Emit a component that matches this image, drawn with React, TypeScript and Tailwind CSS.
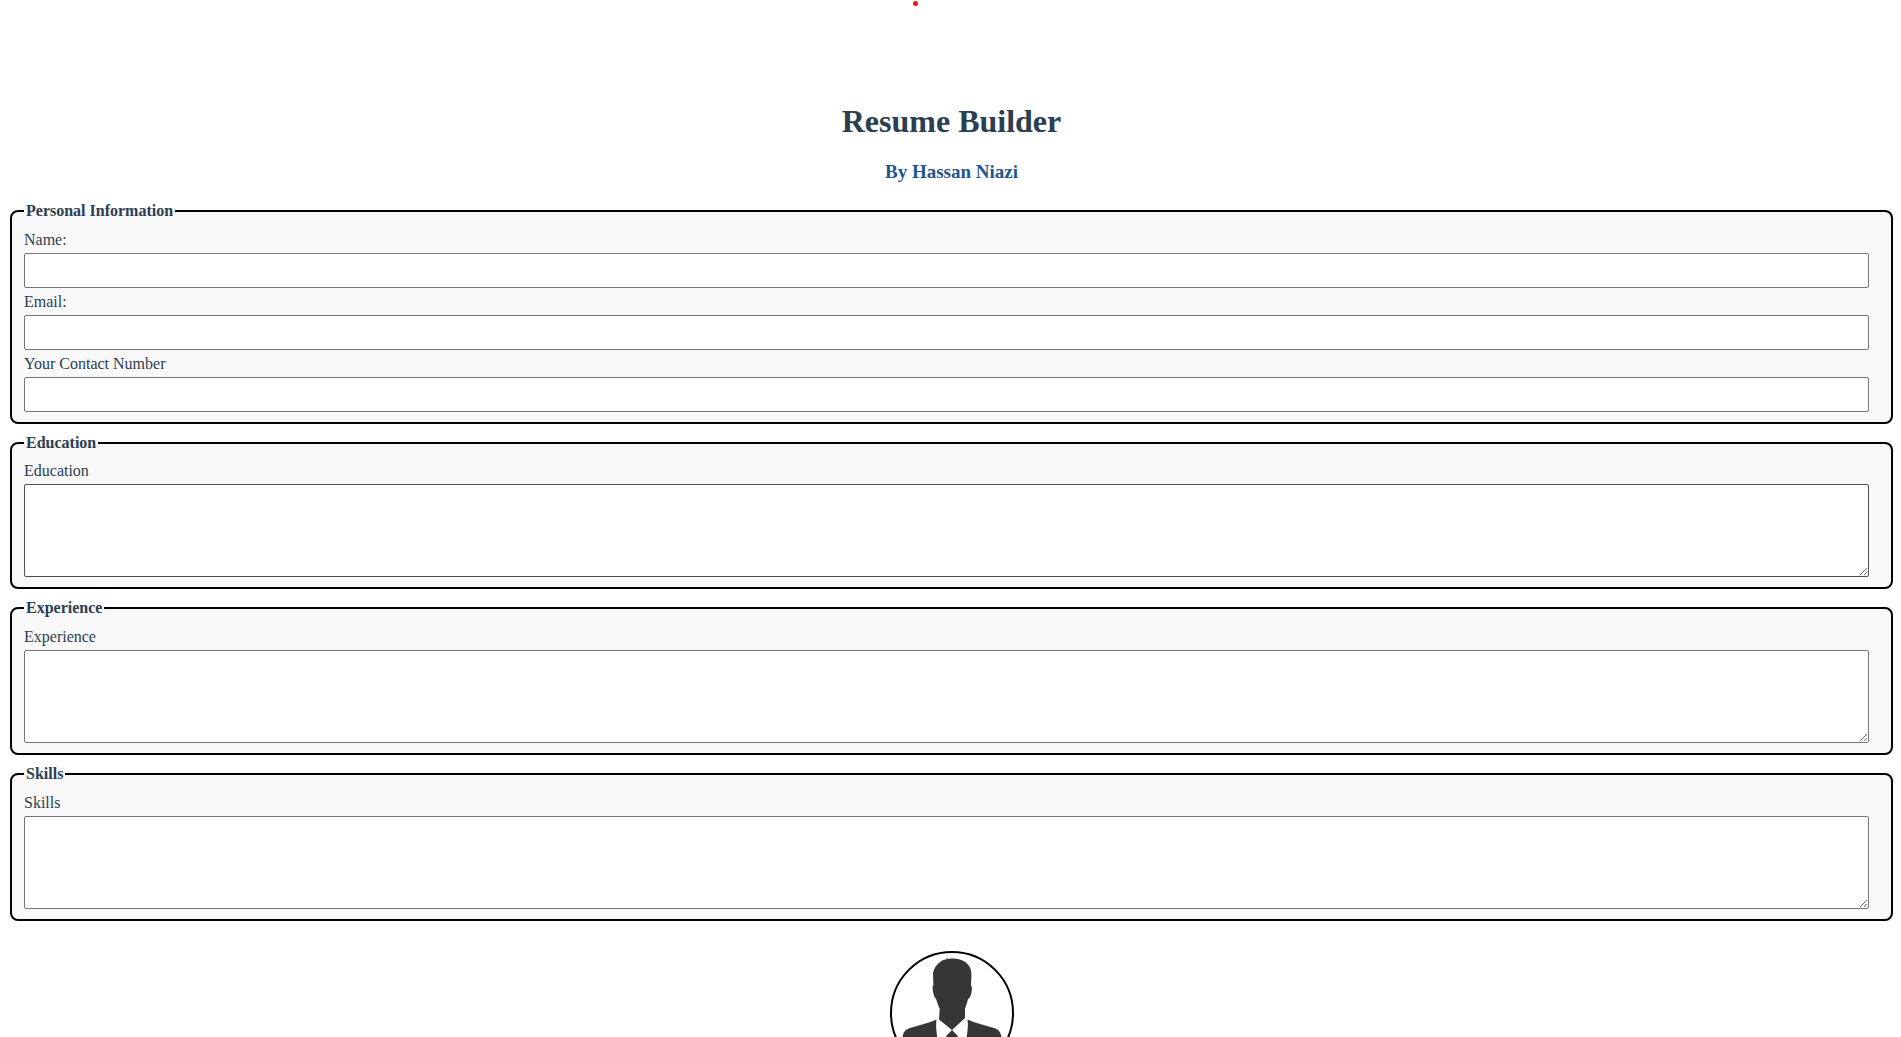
import React from "react";

const labelClass = "block h-[27px] pt-[5px] text-[16px] leading-[18px]";
const controlClass = "block w-full rounded-[2px] border bg-white px-2 text-[16px] text-black";

type SectionProps = { title: string; compact?: boolean; children: React.ReactNode };

function Section({ title, compact = false, children }: SectionProps) {
  return (
    <fieldset className="rounded-[8px] border-2 border-black bg-[#f8f8f8] pr-[22px] pb-[10px] pl-3">
      <legend className="px-[2px] text-[16px] leading-[18px] font-bold">{title}</legend>
      <div className={compact ? "pt-[5px]" : "pt-[6px]"}>{children}</div>
    </fieldset>
  );
}

function TextField({ id, label, type }: { id: string; label: string; type: string }) {
  return (
    <div>
      <label htmlFor={id} className={labelClass}>{label}</label>
      <input id={id} type={type} className={`${controlClass} h-[35px] border-[#767676]`} />
    </div>
  );
}

function TextArea({ id, label, active = false }: { id: string; label: string; active?: boolean }) {
  return (
    <div>
      <label htmlFor={id} className={labelClass}>{label}</label>
      <textarea
        id={id}
        className={`${controlClass} h-[93px] resize-y ${active ? "border-[#4f4f4f]" : "border-[#767676]"}`}
      />
    </div>
  );
}

function Avatar() {
  return (
    <svg viewBox="0 0 120 120" className="size-[120px]" role="img" aria-label="Profile picture">
      <g fill="#363636">
        <path d="M54 4.500L56.500 6C60 5.400 64 5.500 67 6.300C72 7.500 76 10.500 78 14.500C79.300 17.500 79.500 20 79.400 24L78.900 32.500L79.900 34C80 39 79 43 77 45.500L76 45.700C75.500 49 74 53 73 55.500L73 65L60 77L47 66.500L47.700 55.500C46.500 53 45 49 44 45.500C42 45 40.700 38 40.500 33.500L41.400 32.500L41 20C42 15 44.500 12 47.500 9.500C50 7.500 52.500 6.300 55.300 6.300Z" />
        <path d="M44.500 66.500C43 76 46 99 58 119H5C6 105 8 91 11 82C12 78 14 76.500 18 75C27 72 37 70 44.500 66.500Z" />
        <path d="M75.500 66.500C77 76 74 99 62 119H115C114 105 112 91 109 82C108 78 106 76.500 102 75C93 72 83 70 75.500 66.500Z" />
        <path d="M60 77L66 83L63 88L66 108L60 119L54 108L57 88L54 83Z" />
      </g>
    </svg>
  );
}

export default function App() {
  return (
    <div className="h-screen overflow-x-hidden overflow-y-auto bg-white font-['Liberation_Serif',serif] text-[#2c3e50] [scrollbar-width:none]">
      <div className="flex flex-col pr-2 pl-[10px]">
        <header className="flex flex-col items-center">
          <span className="mt-[1px] mr-[73px] size-[5px] rounded-full bg-[#f01418]" aria-hidden="true" />
          <h1 className="mt-[97px] text-[32px] leading-[37px] font-bold">Resume Builder</h1>
          <h2 className="mt-[21px] text-[19px] leading-[22px] font-bold text-[#1f5591]">By Hassan Niazi</h2>
        </header>
        <form className="mt-[19px] flex flex-col gap-[10px]">
          <Section title="Personal Information">
            <TextField id="name" label="Name:" type="text" />
            <TextField id="email" label="Email:" type="email" />
            <TextField id="contact" label="Your Contact Number" type="tel" />
          </Section>
          <Section title="Education" compact>
            <TextArea id="education" label="Education" active />
          </Section>
          <Section title="Experience">
            <TextArea id="experience" label="Experience" />
          </Section>
          <Section title="Skills">
            <TextArea id="skills" label="Skills" />
          </Section>
          <div className="mt-5 flex justify-center">
            <div className="size-[124px] overflow-hidden rounded-full border-2 border-black">
              <Avatar />
            </div>
          </div>
        </form>
      </div>
    </div>
  );
}
